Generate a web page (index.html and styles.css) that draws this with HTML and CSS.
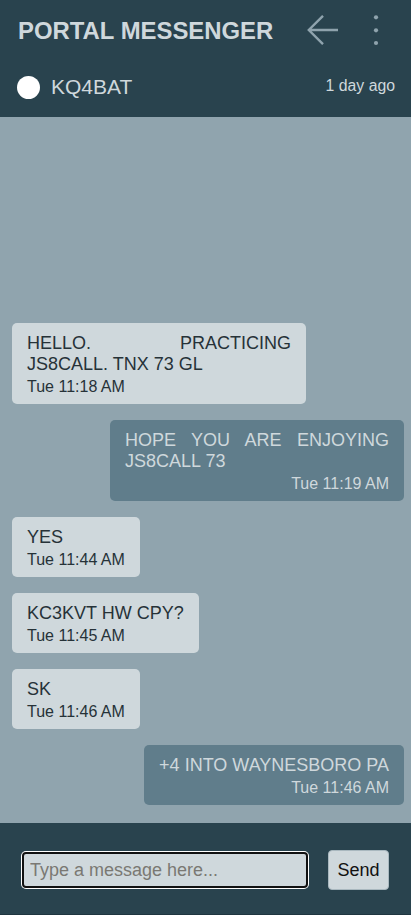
FILE: index.html
```html
<!DOCTYPE html>
<html lang="en">
<head>
<meta charset="utf-8">
<title>Portal Messenger</title>
<link rel="stylesheet" href="styles.css">
</head>
<body>
<div class="app">
  <header class="header">
    <div class="top-row">
      <h1 class="title">PORTAL MESSENGER</h1>
      <div class="actions">
        <svg class="icon-back" width="32" height="30" viewBox="0 0 32 30" aria-hidden="true">
          <path d="M1.5 15 H31 M16 0.8 L1.8 15 L16 29.2" fill="none" stroke="#8fa3ad" stroke-width="2.4" stroke-linecap="butt" stroke-linejoin="miter"/>
        </svg>
        <svg class="icon-more" width="8" height="32" viewBox="0 0 8 32" aria-hidden="true">
          <circle cx="4" cy="3.3" r="2.1" fill="#8fa3ad"/>
          <circle cx="4" cy="16.3" r="2.1" fill="#8fa3ad"/>
          <circle cx="4" cy="29" r="2.1" fill="#8fa3ad"/>
        </svg>
      </div>
    </div>
    <div class="contact-row">
      <div class="contact">
        <span class="status-dot"></span>
        <span class="callsign">KQ4BAT</span>
      </div>
      <span class="last-seen">1 day ago</span>
    </div>
  </header>

  <main class="chat">
    <div class="msg received">
      <div class="msg-text">HELLO. PRACTICING JS8CALL. TNX 73 GL</div>
      <div class="msg-time">Tue 11:18 AM</div>
    </div>
    <div class="msg sent">
      <div class="msg-text">HOPE YOU ARE ENJOYING JS8CALL 73</div>
      <div class="msg-time">Tue 11:19 AM</div>
    </div>
    <div class="msg received">
      <div class="msg-text">YES</div>
      <div class="msg-time">Tue 11:44 AM</div>
    </div>
    <div class="msg received">
      <div class="msg-text">KC3KVT HW CPY?</div>
      <div class="msg-time">Tue 11:45 AM</div>
    </div>
    <div class="msg received">
      <div class="msg-text">SK</div>
      <div class="msg-time">Tue 11:46 AM</div>
    </div>
    <div class="msg sent">
      <div class="msg-text">+4 INTO WAYNESBORO PA</div>
      <div class="msg-time">Tue 11:46 AM</div>
    </div>
  </main>

  <footer class="composer">
    <input class="composer-input" type="text" placeholder="Type a message here...">
    <button class="send-btn" type="button">Send</button>
  </footer>
</div>
</body>
</html>
```

FILE: styles.css
```css
* {
  box-sizing: border-box;
}

html, body {
  margin: 0;
  padding: 0;
  height: 100%;
}

body {
  font-family: "Liberation Sans", Arial, sans-serif;
  font-size: 18px;
  background: #29434e;
  color: #cfd8dc;
}

.app {
  display: flex;
  flex-direction: column;
  height: 915px;
  width: 411px;
}

.header {
  background: #29434e;
  flex: 0 0 auto;
}

.top-row {
  height: 62px;
  display: flex;
  align-items: center;
  justify-content: space-between;
  padding: 0 31.5px 0 18px;
}

.title {
  margin: 0;
  font-size: 23.9px;
  font-weight: bold;
  color: #cfd8dc;
  line-height: normal;
  letter-spacing: 0;
}

.actions {
  display: flex;
  align-items: center;
  gap: 33px;
}

.icon-back {
  display: block;
  margin-top: -3px;
}

.icon-more {
  display: block;
  margin-top: -3px;
}

.contact-row {
  height: 55px;
  display: flex;
  align-items: center;
  justify-content: space-between;
  padding: 0 16px 5px 17px;
}

.contact {
  display: flex;
  align-items: center;
  gap: 11px;
}

.status-dot {
  width: 23px;
  height: 23px;
  border-radius: 50%;
  background: #ffffff;
  display: block;
}

.callsign {
  font-size: 21px;
  color: #cfd8dc;
}

.last-seen {
  font-size: 15.8px;
  color: #cfd8dc;
  margin-top: -2px;
}

.chat {
  flex: 1 1 auto;
  background: #90a4ae;
  display: flex;
  flex-direction: column;
  justify-content: flex-end;
  gap: 15.3px;
  padding: 0 7px 17.7px 12px;
  overflow: hidden;
}

.msg {
  max-width: 75%;
  border-radius: 5px;
  padding: 10px 15px 8.5px;
}

.received {
  align-self: flex-start;
  background: #cfd8dc;
  color: #263238;
}

.sent {
  align-self: flex-end;
  background: #607d8b;
  color: #cfd8dc;
}

.msg-text {
  text-align: justify;
  line-height: normal;
}

.msg-time {
  font-size: 16px;
  margin-top: 3.2px;
  line-height: 18px;
}

.sent .msg-time {
  text-align: right;
}

.composer {
  flex: 0 0 92px;
  background: #29434e;
  display: flex;
  align-items: center;
  gap: 20px;
  padding: 3px 22px 0 22px;
  border-bottom: 1px solid #1f3540;
}

.composer-input {
  width: 286px;
  height: 36px;
  font-family: "Liberation Sans", Arial, sans-serif;
  font-size: 18px;
  background: #cfd8dc;
  color: #263238;
  border: 2px solid #111111;
  border-radius: 4px;
  box-shadow: 0 0 0 1px #ffffff;
  padding: 0 6px;
  outline: none;
}

.composer-input::placeholder {
  color: #7a7873;
}

.send-btn {
  width: 61px;
  height: 40px;
  font-family: "Liberation Sans", Arial, sans-serif;
  font-size: 18px;
  background: #cfd8dc;
  color: #111111;
  border: 1px solid #a9b8bf;
  border-radius: 4px;
  padding: 0;
}
```
